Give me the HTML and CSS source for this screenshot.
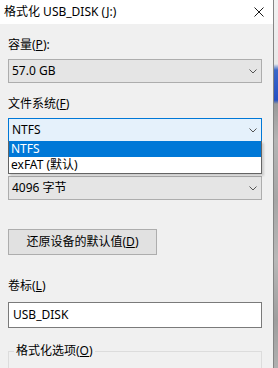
FILE: index.html
```html
<!DOCTYPE html>
<html lang="zh-CN">
<head>
    <meta charset="UTF-8">
    <meta name="viewport" content="width=device-width, initial-scale=1.0">
    <title>格式化 USB_DISK (J:)</title>
    <link rel="stylesheet" href="styles.css">
</head>
<body>
<div class="screen">
    <div class="dialog">
        <div class="titlebar">
            <span class="title">格式化 USB_DISK (J:)</span>
            <svg class="close" width="10" height="10" viewBox="0 0 10 10">
                <path d="M0.5 0.5 L9.5 9.5 M9.5 0.5 L0.5 9.5" stroke="#1a1a1a" stroke-width="1" fill="none"/>
            </svg>
        </div>

        <div class="content">
            <div class="field">
                <label class="label">容量(<u>P</u>):</label>
                <div class="combo">
                    <span>57.0 GB</span>
                    <svg class="chevron" width="8" height="5" viewBox="0 0 8 5"><path d="M0.5 0.5 L4 4 L7.5 0.5" stroke="#555" fill="none"/></svg>
                </div>
            </div>

            <div class="field field-fs">
                <label class="label">文件系统(<u>F</u>)</label>
                <div class="combo-wrap">
                    <div class="combo focused">
                        <span>NTFS</span>
                        <svg class="chevron" width="8" height="5" viewBox="0 0 8 5"><path d="M0.5 0.5 L4 4 L7.5 0.5" stroke="#555" fill="none"/></svg>
                    </div>
                    <ul class="dropdown">
                        <li class="selected">NTFS</li>
                        <li>exFAT (默认)</li>
                    </ul>
                </div>
            </div>

            <!-- label of this one sits under the open list -->
            <div class="field">
                <div class="combo">
                    <span>4096 字节</span>
                    <svg class="chevron" width="8" height="5" viewBox="0 0 8 5"><path d="M0.5 0.5 L4 4 L7.5 0.5" stroke="#555" fill="none"/></svg>
                </div>
            </div>

            <button class="reset-btn">还原设备的默认值(<u>D</u>)</button>

            <label class="label label-volume">卷标(<u>L</u>)</label>
            <div class="textbox">USB_DISK</div>

            <fieldset class="options">
                <legend>格式化选项(<u>O</u>)</legend>
            </fieldset>
        </div>
    </div>
    <div class="desk"></div>
</div>
</body>
</html>
```

FILE: styles.css
```css
* {
    box-sizing: border-box;
}

html, body {
    margin: 0;
    padding: 0;
    height: 100%;
}

body {
    font-family: "Noto Sans", "Noto Sans CJK SC", sans-serif;
    font-size: 12px;
    color: #000;
    overflow: hidden;
}

.screen {
    display: flex;
    width: 278px;
    height: 368px;
}

.dialog {
    width: 274px;
    height: 100%;
    background: #f0f0f0;
    border-right: 1px solid #858585;
}

.desk {
    flex: 1;
    background: linear-gradient(to bottom,
        #f2f2f2 0, #e8e8e8 64px,
        #3b68c8 70px, #2550c4 100px,
        #9a9a9a 104px, #b4b4b4 140px,
        #a6a6a6 200px, #b8b8b8 260px,
        #9e9e9e 320px, #b0b0b0 368px);
}

.titlebar {
    height: 24px;
    background: #fff;
    display: flex;
    align-items: center;
    justify-content: space-between;
    padding: 0 9px 0 4px;
}

.title {
    line-height: 16px;
}

.content {
    padding: 13px 11px 0 8px;
}

.label {
    display: block;
    height: 16px;
    line-height: 16px;
    margin-bottom: 6px;
}

.field {
    margin-bottom: 13px;
}

.field-fs {
    margin-bottom: 34px;
}

.combo {
    height: 24px;
    border: 1px solid #adadad;
    background: #e5e5e5;
    display: flex;
    align-items: center;
    justify-content: space-between;
    padding: 0 4px 0 3px;
    line-height: 16px;
}

.combo.focused {
    border-color: #0078d7;
    background: #e5f1fb;
}

.chevron {
    display: block;
}

.combo-wrap {
    position: relative;
}

.dropdown {
    position: absolute;
    top: 23px;
    left: 0;
    right: 0;
    margin: 0;
    padding: 0;
    list-style: none;
    background: #fff;
    border: 1px solid #646464;
    border-top: none;
    box-shadow: 2px 2px 2px rgba(0, 0, 0, 0.15);
    z-index: 2;
}

.dropdown li {
    height: 16px;
    line-height: 16px;
    padding-left: 2px;
}

.dropdown li.selected {
    background: #0078d7;
    color: #fff;
}

.reset-btn {
    display: block;
    margin-top: 29px;
    width: 149px;
    height: 26px;
    padding: 0;
    border: 1px solid #adadad;
    background: #e1e1e1;
    font-family: inherit;
    font-size: 12px;
    line-height: 16px;
    color: #000;
}

.label-volume {
    margin-top: 23px;
    margin-bottom: 8px;
}

.textbox {
    height: 26px;
    border: 1px solid #7a7a7a;
    background: #fff;
    padding: 0 4px;
    line-height: 24px;
}

.options {
    margin: 15px 0 0;
    padding: 0 5px 10px;
    border: 1px solid #dcdcdc;
    min-height: 40px;
}

.options legend {
    padding: 0 2px;
    line-height: 16px;
}
```
